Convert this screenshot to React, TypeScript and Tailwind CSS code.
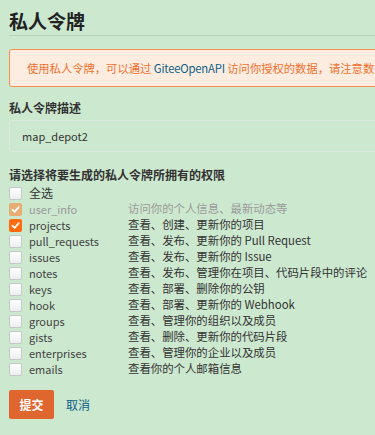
import React from "react";

const rows: { name: string; desc: string; state: "none" | "disabled" | "checked" }[] = [
  { name: "user_info", desc: "访问你的个人信息、最新动态等", state: "disabled" },
  { name: "projects", desc: "查看、创建、更新你的项目", state: "checked" },
  { name: "pull_requests", desc: "查看、发布、更新你的 Pull Request", state: "none" },
  { name: "issues", desc: "查看、发布、更新你的 Issue", state: "none" },
  { name: "notes", desc: "查看、发布、管理你在项目、代码片段中的评论", state: "none" },
  { name: "keys", desc: "查看、部署、删除你的公钥", state: "none" },
  { name: "hook", desc: "查看、部署、更新你的 Webhook", state: "none" },
  { name: "groups", desc: "查看、管理你的组织以及成员", state: "none" },
  { name: "gists", desc: "查看、删除、更新你的代码片段", state: "none" },
  { name: "enterprises", desc: "查看、管理你的企业以及成员", state: "none" },
  { name: "emails", desc: "查看你的个人邮箱信息", state: "none" },
];

function Box({ state }: { state: "none" | "disabled" | "checked" }) {
  if (state === "none") {
    return <span className="block shrink-0 w-[13px] h-[13px] rounded-[2px] border border-[#c4c8c6] bg-gradient-to-b from-white to-[#eceeed]" />;
  }
  const bg = state === "checked" ? "bg-[#ff6a0c]" : "bg-[#e8ad73]";
  return (
    <span className={`flex shrink-0 items-center justify-center w-[13px] h-[13px] rounded-[2px] ${bg}`}>
      <svg width="9" height="9" viewBox="0 0 10 10">
        <path d="M1.5 5.2 L4 7.6 L8.6 2.4" fill="none" stroke="white" strokeWidth="1.9" strokeLinecap="round" strokeLinejoin="round" />
      </svg>
    </span>
  );
}

export default function App() {
  return (
    <div
      className="w-[375px] h-[435px] overflow-hidden bg-[#cce8cf] text-[#333]"
      style={{ fontFamily: '"Noto Sans CJK SC", "Noto Sans", sans-serif' }}
    >
      <div className="w-[480px] pl-[9px]">
        <h1 className="pt-[7px] h-[35px] text-[19px] leading-[28px] font-bold text-[#222]">私人令牌</h1>
        <div className="h-px bg-[#b5d3b9]" />
        <div className="mt-[13px] h-[38px] border border-[#f58e4f] rounded-[3px] bg-[#fdede0] pl-[17px] flex items-center text-[11.3px] text-[#f0702f] whitespace-nowrap">
          <span>使用私人令牌，可以通过 <span className="text-[#0b5f86] tracking-[-0.2px]">GiteeOpenAPI</span> 访问你授权的数据，请注意数据保密</span>
        </div>
        <div className="mt-[12px] text-[12px] leading-[18px] font-bold text-[#333]">私人令牌描述</div>
        <div className="mt-[3px] h-[32px] border border-[#dde9df] rounded-[2px] pl-[12px] flex items-center text-[11px] text-[#333]">
          map_depot2
        </div>
        <div className="mt-[14px] text-[12px] leading-[18px] font-bold text-[#333]">请选择将要生成的私人令牌所拥有的权限</div>
        <div className="mt-[1px] flex flex-col text-[12px] w-[366px]">
          <div className="h-[16px] flex items-center">
            <Box state="none" />
            <span className="ml-[7px] text-[#333]">全选</span>
          </div>
          {rows.map((r) => (
            <div key={r.name} className="h-[16px] flex items-center whitespace-nowrap">
              <Box state={r.state} />
              <span className={`ml-[7px] w-[99px] shrink-0 text-[11px] ${r.state === "disabled" ? "text-[#9a9a9a]" : "text-[#444]"}`}>{r.name}</span>
              <span className={`text-[11.4px] ${r.state === "disabled" ? "text-[#9a9a9a]" : "text-[#333]"}`}>{r.desc}</span>
            </div>
          ))}
        </div>
        <div className="mt-[13px] flex items-center">
          <button className="w-[45px] h-[29px] rounded-[2px] bg-[#e0662f] text-white text-[12px] font-bold">提交</button>
          <span className="ml-[12px] text-[12px] text-[#0b5f86]">取消</span>
        </div>
      </div>
    </div>
  );
}
